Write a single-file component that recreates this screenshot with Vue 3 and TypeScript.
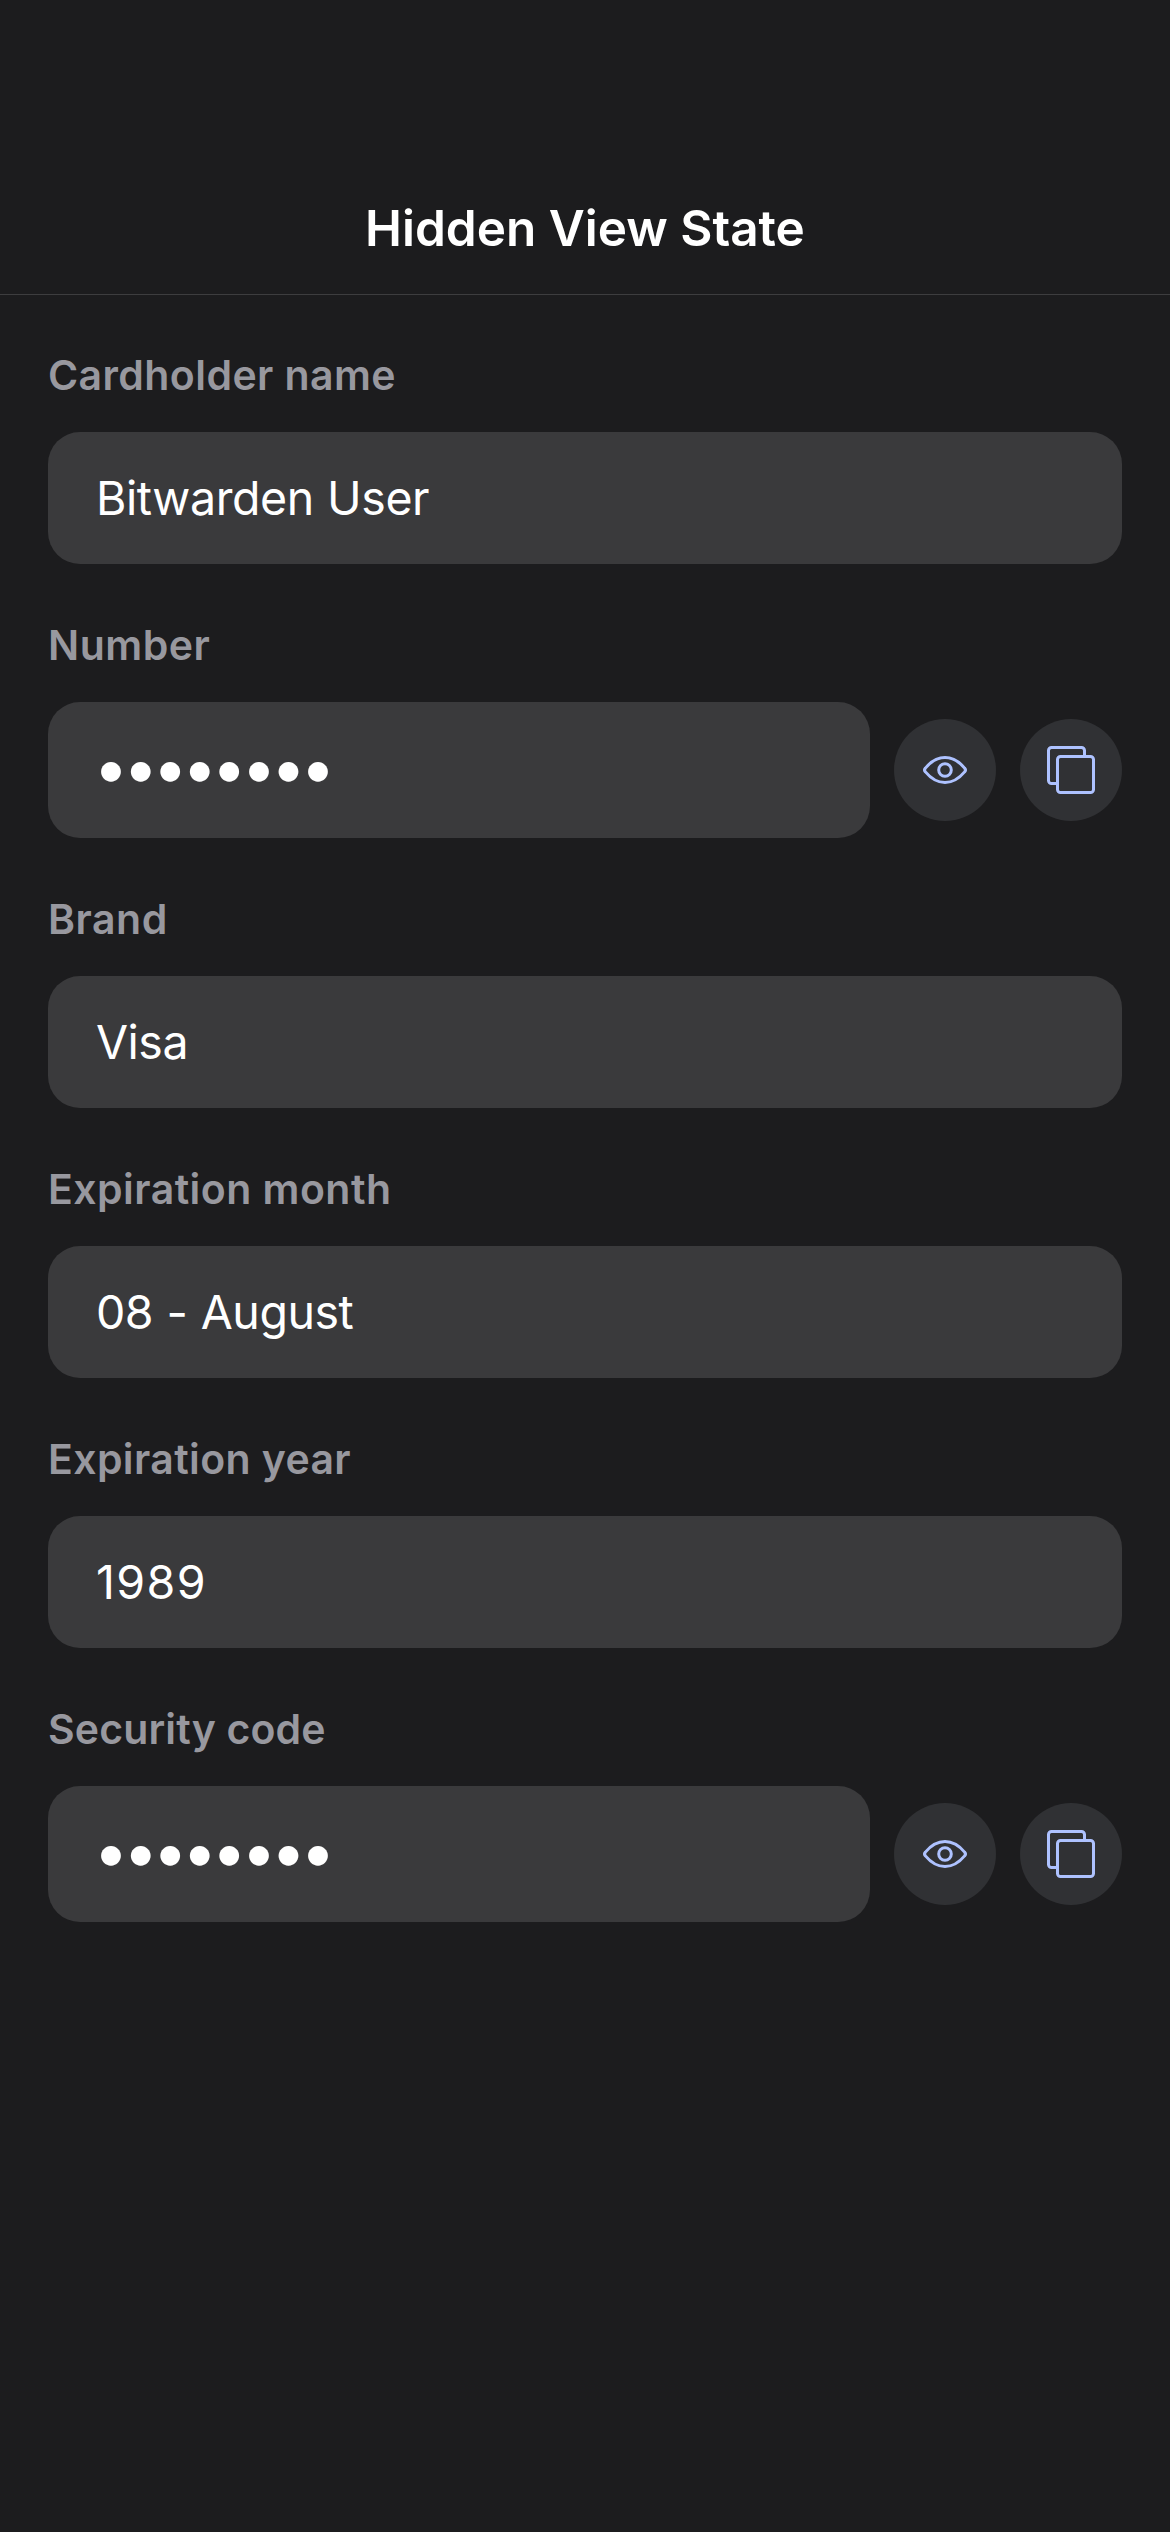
<script setup lang="ts">
interface Field {
  label: string
  value: string
  hidden?: boolean
  labelTracking: number
  valueTracking: number
}

const fields: Field[] = [
  { label: 'Cardholder name', value: 'Bitwarden User', labelTracking: 0.41, valueTracking: -0.42 },
  { label: 'Number', value: '••••••••', hidden: true, labelTracking: 0.5, valueTracking: 0 },
  { label: 'Brand', value: 'Visa', labelTracking: 0.55, valueTracking: -0.5 },
  { label: 'Expiration month', value: '08 - August', labelTracking: 0.46, valueTracking: -0.46 },
  { label: 'Expiration year', value: '1989', labelTracking: 0.38, valueTracking: 1.4 },
  { label: 'Security code', value: '••••••••', hidden: true, labelTracking: 0.15, valueTracking: 0 },
]
</script>

<template>
  <div class="screen">
    <header class="nav-bar">
      <h1 class="title">Hidden View State</h1>
    </header>
    <main class="fields">
      <section v-for="field in fields" :key="field.label" class="field">
        <h2 class="label" :style="{ letterSpacing: `${field.labelTracking}px` }">{{ field.label }}</h2>
        <div class="row">
          <div class="box" :class="{ tall: field.hidden }">
            <span v-if="field.hidden" class="dots">{{ field.value }}</span>
            <span v-else class="value" :style="{ letterSpacing: `${field.valueTracking}px` }">{{ field.value }}</span>
          </div>
          <template v-if="field.hidden">
            <button class="action" type="button" aria-label="Show">
              <svg viewBox="0 0 102 102" fill="none" stroke="currentColor" stroke-width="3" stroke-linejoin="round">
                <path d="M31.4 49.1C37.4 41.9 43.9 38.5 51 38.5S64.600 41.900 70.600 49.100Q72.400 51 70.600 52.900C64.600 60.100 58.100 63.500 51 63.500S37.400 60.100 31.400 52.900Q29.600 51 31.400 49.100Z" />
                <circle cx="51" cy="51" r="6.3" />
              </svg>
            </button>
            <button class="action" type="button" aria-label="Copy">
              <svg viewBox="0 0 102 102" fill="none" stroke="currentColor" stroke-width="3">
                <path d="M37.5 64.5H31.500A3 3 0 0 1 28.500 61.500V31.500A3 3 0 0 1 31.500 28.500H61.500A3 3 0 0 1 64.500 31.500V37.500" />
                <rect x="37.5" y="37.5" width="36" height="36" rx="3" />
              </svg>
            </button>
          </template>
        </div>
      </section>
    </main>
  </div>
</template>

<style>
body {
  background: #1c1c1e;
}
</style>

<style scoped>
.screen {
  box-sizing: border-box;
  width: 1170px;
  min-height: 2532px;
  background: #1c1c1e;
  font-family: Inter, "Liberation Sans", sans-serif;
}

.nav-bar {
  display: flex;
  align-items: center;
  justify-content: center;
  box-sizing: border-box;
  height: 295px;
  padding-top: 162px;
  border-bottom: 1px solid #3d3d3f;
}

.title {
  margin: 0;
  color: #fff;
  font-size: 49.5px;
  font-weight: 600;
  line-height: 60px;
}

.fields {
  display: flex;
  flex-direction: column;
  gap: 51px;
  padding: 50px 48px 0;
}

.label {
  margin: 0 0 27px;
  color: #98989f;
  font-size: 41px;
  font-weight: 600;
  line-height: 60px;
}

.row {
  display: flex;
  align-items: center;
  gap: 24px;
}

.box {
  display: flex;
  flex: 1;
  align-items: center;
  box-sizing: border-box;
  height: 132px;
  padding: 0 48px;
  border-radius: 32px;
  background: #3a3a3c;
  color: #fff;
}

.box.tall {
  height: 136px;
}

.value {
  font-size: 46.5px;
  line-height: 60px;
  word-spacing: 0.7px;
  white-space: pre;
}

.dots {
  margin: -6px 0 0 -2.7px;
  font-size: 63px;
  line-height: 66px;
  letter-spacing: -5.87px;
}

.action {
  flex: none;
  width: 102px;
  height: 102px;
  padding: 0;
  border: 0;
  border-radius: 50%;
  background: #303134;
  color: #aec2ff;
}

.action svg {
  display: block;
  width: 102px;
  height: 102px;
}
</style>
